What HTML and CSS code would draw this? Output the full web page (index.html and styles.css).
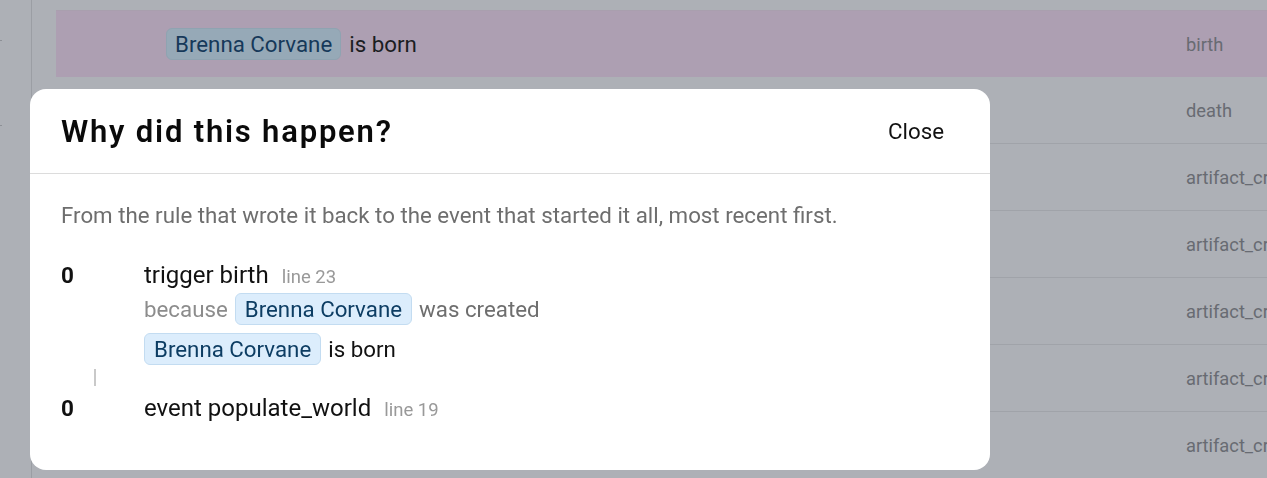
FILE: index.html
```html
<!DOCTYPE html>
<html lang="en">
<head>
<meta charset="utf-8">
<title>Why did this happen?</title>
<link rel="stylesheet" href="styles.css">
</head>
<body>
<div class="app">
  <aside class="sidebar">
    <span class="tick tick-1"></span>
    <span class="tick tick-2"></span>
  </aside>
  <main class="feed">
    <div class="row row-hl">
      <div class="cell-pad"></div>
      <div class="cell-main"><span class="chip chip-dim">Brenna Corvane</span><span>is born</span></div>
      <div class="cell-kind">birth</div>
    </div>
    <div class="row">
      <div class="cell-pad"></div>
      <div class="cell-main"></div>
      <div class="cell-kind">death</div>
    </div>
    <div class="row">
      <div class="cell-pad"></div>
      <div class="cell-main"></div>
      <div class="cell-kind">artifact_created</div>
    </div>
    <div class="row">
      <div class="cell-pad"></div>
      <div class="cell-main"></div>
      <div class="cell-kind">artifact_created</div>
    </div>
    <div class="row">
      <div class="cell-pad"></div>
      <div class="cell-main"></div>
      <div class="cell-kind">artifact_created</div>
    </div>
    <div class="row">
      <div class="cell-pad"></div>
      <div class="cell-main"></div>
      <div class="cell-kind">artifact_created</div>
    </div>
    <div class="row">
      <div class="cell-pad"></div>
      <div class="cell-main"></div>
      <div class="cell-kind">artifact_created</div>
    </div>
  </main>
</div>

<div class="modal" role="dialog" aria-labelledby="why-title">
  <header class="modal-head">
    <h2 id="why-title" class="modal-title">Why did this happen?</h2>
    <button class="close-btn" type="button">Close</button>
  </header>
  <div class="modal-body">
    <p class="desc">From the rule that wrote it back to the event that started it all, most recent first.</p>
    <ol class="chain">
      <li class="step">
        <div class="step-num">0</div>
        <div class="step-main">
          <div class="step-line"><span class="step-name">trigger birth</span><span class="step-loc">line 23</span></div>
          <div class="step-cause"><span class="muted">because</span><span class="chip">Brenna Corvane</span><span>was created</span></div>
          <div class="step-result"><span class="chip">Brenna Corvane</span><span>is born</span></div>
        </div>
      </li>
      <li class="connector" aria-hidden="true"><span class="connector-bar"></span></li>
      <li class="step">
        <div class="step-num">0</div>
        <div class="step-main">
          <div class="step-line"><span class="step-name">event populate_world</span><span class="step-loc">line 19</span></div>
        </div>
      </li>
    </ol>
  </div>
</div>
</body>
</html>
```

FILE: styles.css
```css
* { box-sizing: border-box; }

html, body {
  margin: 0;
  padding: 0;
  height: 100%;
  overflow: hidden;
}

body {
  font-family: Roboto, "Noto Sans", "Liberation Sans", sans-serif;
  background: #adb0b6;
  color: #111;
}

.app {
  display: flex;
  height: 100%;
}

.sidebar {
  width: 32px;
  flex: none;
  border-right: 1px solid #9b9ea4;
  position: relative;
}

.tick {
  position: absolute;
  left: 0;
  width: 2px;
  height: 1px;
  background: #8d9096;
}
.tick-1 { top: 40px; }
.tick-2 { top: 125px; }

.feed {
  flex: 1;
  padding: 10px 0 0 24px;
  overflow: hidden;
}

.row {
  display: grid;
  grid-template-columns: 110px 1020px 1fr;
  align-items: center;
  height: 67px;
  border-bottom: 1px solid #a0a3a9;
  white-space: nowrap;
  overflow: hidden;
}

.row-hl {
  background: #ad9fb2;
  border-top: 1px solid #a99fae;
  border-bottom: none;
}

.cell-main {
  display: flex;
  align-items: center;
  gap: 8px;
  font-size: 22.3px;
  color: #1b1d22;
}

.cell-kind {
  font-size: 18.3px;
  color: #686b72;
}

.chip {
  display: inline-flex;
  align-items: center;
  height: 32px;
  padding: 0 9px;
  font-size: 22.3px;
  color: #0d3d63;
  background: #dcedfc;
  border: 1px solid #c3dcf1;
  border-radius: 6px;
}

.chip-dim {
  padding: 0 8px;
  color: #16395a;
  background: #96a9b7;
  border-color: #8fa3b1;
}

/* Modal */
.modal {
  position: fixed;
  left: 30px;
  top: 89px;
  width: 960px;
  height: 381px;
  background: #fff;
  border-radius: 16px;
  overflow: hidden;
}

.modal-head {
  display: flex;
  align-items: center;
  justify-content: space-between;
  height: 85px;
  padding: 0 32px 0 31px;
  border-bottom: 1px solid #dcdcdc;
}

.modal-title {
  margin: 0;
  font-size: 31px;
  font-weight: 600;
  letter-spacing: 1.8px;
  color: #0a0a0a;
}

.close-btn {
  font: inherit;
  font-size: 22.3px;
  color: #111;
  background: none;
  border: none;
  padding: 8px 14px;
  cursor: pointer;
}

.modal-body {
  padding: 27px 31px 0;
}

.desc {
  margin: 0;
  font-size: 22.3px;
  line-height: 28px;
  color: #6e6e6e;
}

.chain {
  list-style: none;
  margin: 32px 0 0;
  padding: 0;
}

.step {
  display: grid;
  grid-template-columns: 83px 1fr;
}

.step-num {
  font-size: 22.5px;
  font-weight: 700;
  line-height: 28px;
}

.step-line {
  display: flex;
  align-items: baseline;
  gap: 13px;
  line-height: 28px;
}

.step-name {
  font-size: 24px;
  color: #111;
}

.step-loc {
  font-size: 18.5px;
  color: #999;
}

.step-cause,
.step-result {
  display: flex;
  align-items: center;
  gap: 7px;
  font-size: 22.3px;
  color: #3a3a3a;
}

.step-cause { margin-top: 2px; color: #6e6e6e; }
.step-result { margin-top: 8px; color: #111; }

.muted { color: #8c8c8c; }

.connector {
  height: 29px;
  padding: 4px 0 8px 33px;
}

.connector-bar {
  display: block;
  width: 2px;
  height: 17px;
  background: #c9c9c9;
}
```
